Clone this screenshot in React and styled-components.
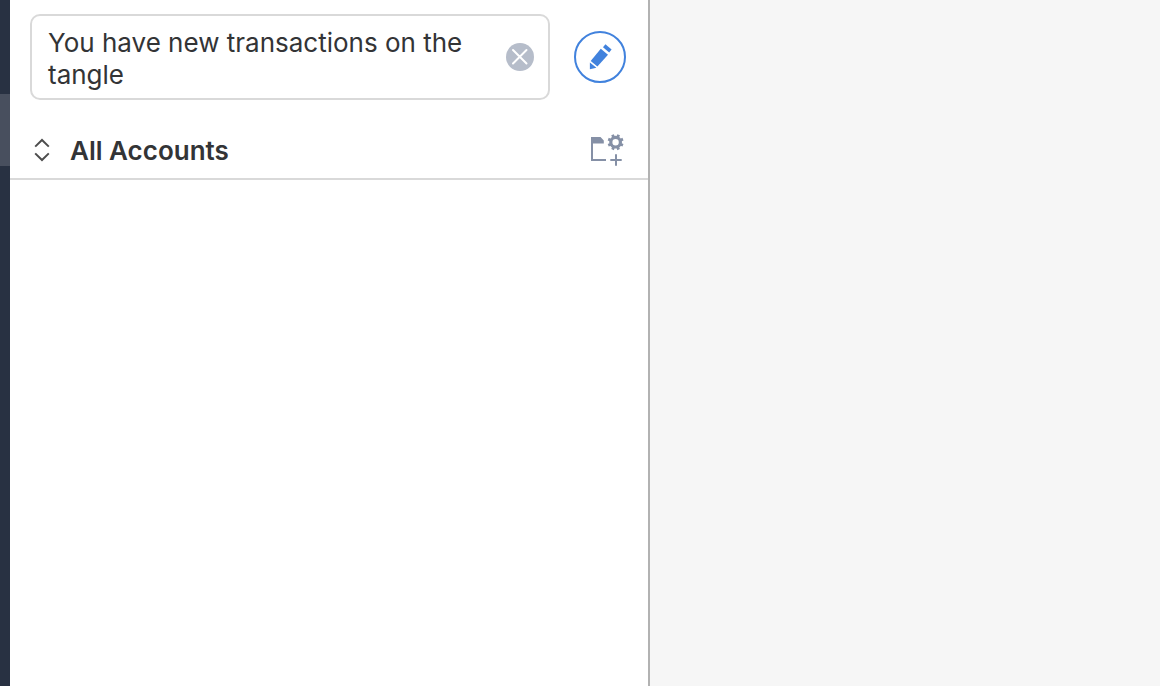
import React from "react";
import styled, { createGlobalStyle } from "styled-components";

const GlobalStyle = createGlobalStyle`
  *, *::before, *::after { box-sizing: border-box; }
  body {
    margin: 0;
    background: #f6f6f6;
    color: #333436;
    font-family: Inter, "Liberation Sans", sans-serif;
  }
  button { font: inherit; color: inherit; border: 0; padding: 0; background: none; cursor: pointer; }
`;

const Layout = styled.div`
  display: grid;
  grid-template-columns: 10px minmax(0, 640fr) minmax(0, 510fr);
  min-height: 100vh;
`;

const Rail = styled.nav`
  display: flex;
  flex-direction: column;
  padding-top: 94px;
  background: #283142;
`;

const RailItem = styled.button`
  height: 72px;
  background: ${(p) => (p.$active ? "#484f5e" : "transparent")};
`;

const Panel = styled.section`
  background: #fff;
  border-right: 2px solid #b2b2b2;
`;

const Toolbar = styled.div`
  display: flex;
  align-items: center;
  gap: 24px;
  padding: 14px 22px 20px 20px;
`;

const Notice = styled.div`
  flex: 1;
  display: flex;
  align-items: center;
  gap: 16px;
  min-height: 86px;
  padding: 6px 14px 6px 16px;
  border: 2px solid #d9d9d9;
  border-radius: 10px;
`;

const NoticeText = styled.p`
  flex: 1;
  margin: 0;
  padding-top: 4px;
  font-size: 26px;
  line-height: 32px;
`;

const IconButton = styled.button`
  flex: none;
  display: block;
  width: ${(p) => p.$size}px;
  height: ${(p) => p.$size}px;

  svg { display: block; width: 100%; height: 100%; }
`;

const AccountBar = styled.header`
  display: flex;
  align-items: center;
  justify-content: space-between;
  height: 60px;
  padding: 0 24px 0 20px;
  border-bottom: 2px solid #d9d9d9;
`;

const AccountSwitch = styled.button`
  display: flex;
  align-items: center;
  gap: 16px;

  svg { display: block; }
`;

const AccountTitle = styled.span`
  padding-top: 4px;
  font-size: 26px;
  line-height: 32px;
  font-weight: 600;
`;

const Content = styled.main`
  background: #f6f6f6;
`;

const teeth = [0, 45, 90, 135, 180, 225, 270, 315];

const ClearIcon = () => (
  <svg viewBox="0 0 28 28" aria-hidden="true">
    <circle cx="14" cy="14" r="14" fill="#b6bdca" />
    <path d="M7 7l13.5 13.5M20.5 7L7 20.5" stroke="#fff" strokeWidth="2" strokeLinecap="round" />
  </svg>
);

const ComposeIcon = () => (
  <svg viewBox="0 0 52 52" aria-hidden="true">
    <circle cx="26" cy="26" r="25" fill="#fff" stroke="#4182dd" strokeWidth="2" />
    <g fill="#4182dd">
      <path d="M31.4 13.2L37.6 18.6L35.2 21.6L29 16.2Z" />
      <path d="M26.8 17.8L34 23.8L23.4 35.6L16.7 29.9Z" />
      <path d="M15.9 31.4L22.4 36.8L15.9 38.3Z" />
    </g>
  </svg>
);

const SortIcon = () => (
  <svg width="24" height="28" viewBox="0 0 24 28" fill="none" stroke="#4d4d4d" strokeWidth="2" aria-hidden="true">
    <path d="M5.2 11.6L12 5L18.8 11.6M5.2 18.4L12 25L18.8 18.4" />
  </svg>
);

const FolderIcon = () => (
  <svg viewBox="0 0 36 36" fill="none" stroke="#8590a6" aria-hidden="true">
    <path d="M18 29H4V7" strokeWidth="2" />
    <path d="M3 6H12.5L15.8 9.6V12.4H3Z" fill="#8590a6" stroke="none" />
    <circle cx="27.6" cy="11.2" r="4.8" strokeWidth="3.2" />
    {teeth.map((angle) => (
      <path key={angle} d="M27.6 3.2V6" strokeWidth="2.8" transform={`rotate(${angle + 22.5} 27.6 11.2)`} />
    ))}
    <path d="M22.3 29H33.7M28 23.3V34.7" strokeWidth="2" />
  </svg>
);

export default function App() {
  return (
    <>
      <GlobalStyle />
      <Layout>
        <Rail aria-label="Sections">
          <RailItem type="button" $active aria-label="Inbox" aria-current="page" />
        </Rail>
        <Panel aria-label="Messages">
          <Toolbar>
            <Notice role="status">
              <NoticeText>You have new transactions on the tangle</NoticeText>
              <IconButton type="button" $size={28} aria-label="Clear">
                <ClearIcon />
              </IconButton>
            </Notice>
            <IconButton type="button" $size={52} aria-label="Compose">
              <ComposeIcon />
            </IconButton>
          </Toolbar>
          <AccountBar>
            <AccountSwitch type="button">
              <SortIcon />
              <AccountTitle>All Accounts</AccountTitle>
            </AccountSwitch>
            <IconButton type="button" $size={36} aria-label="Add smart folder">
              <FolderIcon />
            </IconButton>
          </AccountBar>
        </Panel>
        <Content />
      </Layout>
    </>
  );
}
